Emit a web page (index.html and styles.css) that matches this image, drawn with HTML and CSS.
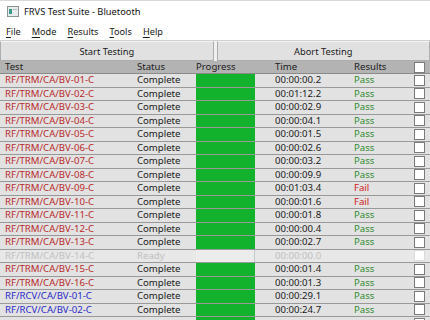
FILE: index.html
```html
<!DOCTYPE html>
<html>
<head>
<meta charset="utf-8">
<link rel="stylesheet" href="styles.css">
</head>
<body>
<div class="window">
  <div class="titlebar">
    <svg class="appicon" width="12" height="11" viewBox="0 0 12 11">
      <rect x="0.5" y="0.5" width="11" height="10" fill="#e8ecec" stroke="#8a9494"/>
      <rect x="2" y="3" width="3" height="5" fill="#3a9a8a"/>
      <rect x="6" y="3" width="4" height="1" fill="#b0b8b8"/>
    </svg>
    <span class="title">FRVS Test Suite - Bluetooth</span>
  </div>
  <div class="menubar">
    <span class="menu"><u>F</u>ile</span>
    <span class="menu"><u>M</u>ode</span>
    <span class="menu"><u>R</u>esults</span>
    <span class="menu"><u>T</u>ools</span>
    <span class="menu"><u>H</u>elp</span>
  </div>
  <div class="buttons">
    <div class="btn">Start Testing</div>
    <div class="btn">Abort Testing</div>
  </div>
  <div class="grid">
    <div class="row head">
      <div class="c test">Test</div>
      <div class="c status">Status</div>
      <div class="c prog">Progress</div>
      <div class="c time">Time</div>
      <div class="c res">Results</div>
      <div class="c chk"><span class="box"></span></div>
    </div>
    <div class="row"><div class="c test trm">RF/TRM/CA/BV-01-C</div><div class="c status">Complete</div><div class="c prog"><span class="bar"></span></div><div class="c time">00:00:00.2</div><div class="c res pass">Pass</div><div class="c chk"><span class="box"></span></div></div>
    <div class="row"><div class="c test trm">RF/TRM/CA/BV-02-C</div><div class="c status">Complete</div><div class="c prog"><span class="bar"></span></div><div class="c time">00:01:12.2</div><div class="c res pass">Pass</div><div class="c chk"><span class="box"></span></div></div>
    <div class="row"><div class="c test trm">RF/TRM/CA/BV-03-C</div><div class="c status">Complete</div><div class="c prog"><span class="bar"></span></div><div class="c time">00:00:02.9</div><div class="c res pass">Pass</div><div class="c chk"><span class="box"></span></div></div>
    <div class="row"><div class="c test trm">RF/TRM/CA/BV-04-C</div><div class="c status">Complete</div><div class="c prog"><span class="bar"></span></div><div class="c time">00:00:04.1</div><div class="c res pass">Pass</div><div class="c chk"><span class="box"></span></div></div>
    <div class="row"><div class="c test trm">RF/TRM/CA/BV-05-C</div><div class="c status">Complete</div><div class="c prog"><span class="bar"></span></div><div class="c time">00:00:01.5</div><div class="c res pass">Pass</div><div class="c chk"><span class="box"></span></div></div>
    <div class="row"><div class="c test trm">RF/TRM/CA/BV-06-C</div><div class="c status">Complete</div><div class="c prog"><span class="bar"></span></div><div class="c time">00:00:02.6</div><div class="c res pass">Pass</div><div class="c chk"><span class="box"></span></div></div>
    <div class="row"><div class="c test trm">RF/TRM/CA/BV-07-C</div><div class="c status">Complete</div><div class="c prog"><span class="bar"></span></div><div class="c time">00:00:03.2</div><div class="c res pass">Pass</div><div class="c chk"><span class="box"></span></div></div>
    <div class="row"><div class="c test trm">RF/TRM/CA/BV-08-C</div><div class="c status">Complete</div><div class="c prog"><span class="bar"></span></div><div class="c time">00:00:09.9</div><div class="c res pass">Pass</div><div class="c chk"><span class="box"></span></div></div>
    <div class="row"><div class="c test trm">RF/TRM/CA/BV-09-C</div><div class="c status">Complete</div><div class="c prog"><span class="bar"></span></div><div class="c time">00:01:03.4</div><div class="c res fail">Fail</div><div class="c chk"><span class="box"></span></div></div>
    <div class="row"><div class="c test trm">RF/TRM/CA/BV-10-C</div><div class="c status">Complete</div><div class="c prog"><span class="bar"></span></div><div class="c time">00:00:01.6</div><div class="c res fail">Fail</div><div class="c chk"><span class="box"></span></div></div>
    <div class="row"><div class="c test trm">RF/TRM/CA/BV-11-C</div><div class="c status">Complete</div><div class="c prog"><span class="bar"></span></div><div class="c time">00:00:01.8</div><div class="c res pass">Pass</div><div class="c chk"><span class="box"></span></div></div>
    <div class="row"><div class="c test trm">RF/TRM/CA/BV-12-C</div><div class="c status">Complete</div><div class="c prog"><span class="bar"></span></div><div class="c time">00:00:00.4</div><div class="c res pass">Pass</div><div class="c chk"><span class="box"></span></div></div>
    <div class="row"><div class="c test trm">RF/TRM/CA/BV-13-C</div><div class="c status">Complete</div><div class="c prog"><span class="bar"></span></div><div class="c time">00:00:02.7</div><div class="c res pass">Pass</div><div class="c chk"><span class="box"></span></div></div>
    <div class="row ready"><div class="c test">RF/TRM/CA/BV-14-C</div><div class="c status">Ready</div><div class="c prog"><span class="bar empty"></span></div><div class="c time">00:00:00.0</div><div class="c res"></div><div class="c chk"><span class="box"></span></div></div>
    <div class="row"><div class="c test trm">RF/TRM/CA/BV-15-C</div><div class="c status">Complete</div><div class="c prog"><span class="bar"></span></div><div class="c time">00:00:01.4</div><div class="c res pass">Pass</div><div class="c chk"><span class="box"></span></div></div>
    <div class="row"><div class="c test trm">RF/TRM/CA/BV-16-C</div><div class="c status">Complete</div><div class="c prog"><span class="bar"></span></div><div class="c time">00:00:01.3</div><div class="c res pass">Pass</div><div class="c chk"><span class="box"></span></div></div>
    <div class="row"><div class="c test rcv">RF/RCV/CA/BV-01-C</div><div class="c status">Complete</div><div class="c prog"><span class="bar"></span></div><div class="c time">00:00:29.1</div><div class="c res pass">Pass</div><div class="c chk"><span class="box"></span></div></div>
    <div class="row"><div class="c test rcv">RF/RCV/CA/BV-02-C</div><div class="c status">Complete</div><div class="c prog"><span class="bar"></span></div><div class="c time">00:00:24.7</div><div class="c res pass">Pass</div><div class="c chk"><span class="box"></span></div></div>
    <div class="row"><div class="c test rcv"></div><div class="c status"></div><div class="c prog"><span class="bar"></span></div><div class="c time"></div><div class="c res"></div><div class="c chk"><span class="box"></span></div></div>
  </div>
</div>
</body>
</html>
```

FILE: styles.css
```css
html, body {
  margin: 0;
  padding: 0;
  background: #ffffff;
  overflow: hidden;
  width: 430px;
  height: 320px;
}
.window {
  font-family: "Noto Sans", "Open Sans", sans-serif;
  color: #1a1a1a;
  width: 430px;
}
.titlebar {
  height: 22px;
  display: flex;
  align-items: center;
  padding-left: 7px;
  gap: 5px;
  background: #ffffff;
  border-top: 1px solid #d8d8d8;
  box-sizing: border-box;
}
.title {
  font-size: 9.3px;
  color: #111;
}
.menubar {
  height: 18px;
  display: flex;
  align-items: center;
  padding-left: 6px;
  gap: 11px;
  font-size: 9.2px;
  background: #ffffff;
}
.menu u {
  text-decoration-thickness: 1px;
  text-underline-offset: 2px;
}
.buttons {
  height: 21px;
  display: flex;
  gap: 3px;
  background: #f0f0f0;
  box-sizing: border-box;
  border-top: 1px solid #d0d0d0;
}
.btn {
  flex: 1;
  display: flex;
  align-items: center;
  justify-content: center;
  font-size: 9.3px;
  background: #e1e1e1;
  border: 1px solid #adadad;
  border-top-color: #f4f4f4;
}
.grid {
  width: 430px;
  background: #f0f0f0;
}
.row {
  display: grid;
  grid-template-columns: 133px 59px 79px 79px 60px 18px 2px;
  height: 13.5px;
  box-sizing: border-box;
  background: #e2e2e2;
  border-bottom: 1.5px solid #999999;
  font-size: 9.6px;
  line-height: 12px;
  align-items: center;
}
.row.head {
  background: #b3b3b3;
  border-bottom: 1px solid #8a8a8a;
  height: 13px;
  color: #202020;
}
.c {
  padding-left: 4px;
  white-space: nowrap;
}
.c.test { padding-left: 5px; }
.c.prog {
  padding-left: 4px;
  height: 100%;
  display: flex;
}
.head .c.prog { display: block; height: auto; }
.bar {
  display: block;
  width: 59px;
  height: 100%;
  background: #12b22d;
}
.bar.empty {
  background: #ececec;
  border-right: 1px solid #c8c8c8;
  box-sizing: border-box;
}
.c.chk {
  padding-left: 4px;
  display: flex;
  align-items: center;
}
.box {
  display: block;
  width: 11px;
  height: 11px;
  background: #ffffff;
  border: 1px solid #7a7a7a;
  box-sizing: border-box;
}
.trm { color: #b82a2a; }
.rcv { color: #2a2ac8; }
.pass { color: #2e8b2e; }
.fail { color: #d01818; }
.row.ready {
  background: #e8e8e8;
  color: #c0c0c0;
}
.row.ready .box { border-color: #dadada; }
```
